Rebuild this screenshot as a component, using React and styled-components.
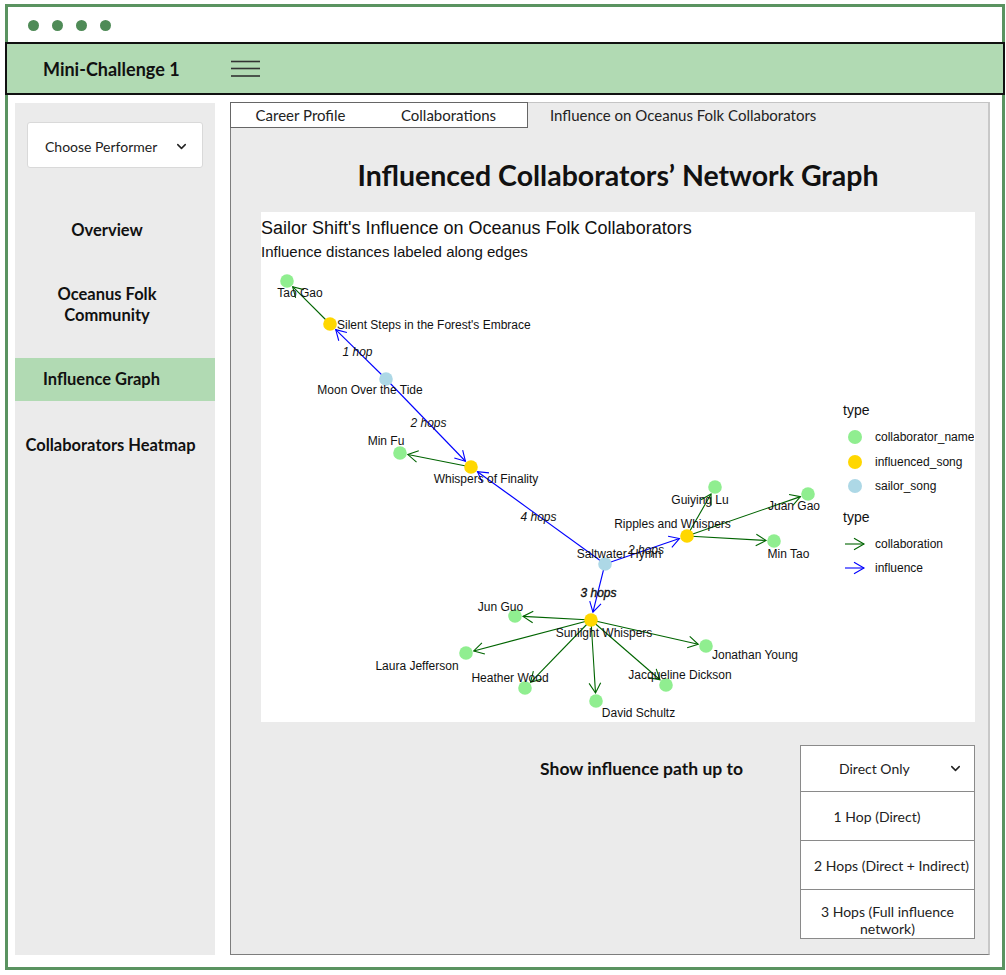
import styled, { createGlobalStyle } from "styled-components";
import { ChevronDown } from "lucide-react";

const GlobalStyle = createGlobalStyle`
  body {
    margin: 0;
    background: #ffffff;
    font-family: Lato, "Open Sans", sans-serif;
    color: #111;
  }
`;

const NODE_COLORS = {
  collab: "#90ee90",
  song: "#ffd700",
  sailor: "#add8e6",
};

const EDGE_COLORS = {
  green: "#006400",
  blue: "#0000ff",
};

// plot coordinates, origin at the top-left of the plot area
const nodes = {
  taoGao: { x: 26, y: 20, type: "collab", label: "Tao Gao", lx: 39, ly: 32 },
  silent: { x: 69, y: 63, type: "song", label: "Silent Steps in the Forest's Embrace", lx: 76, ly: 64, anchor: "start" },
  moon: { x: 125, y: 118, type: "sailor", label: "Moon Over the Tide", lx: 109, ly: 129 },
  minFu: { x: 139, y: 192, type: "collab", label: "Min Fu", lx: 125, ly: 180 },
  whispers: { x: 210, y: 206, type: "song", label: "Whispers of Finality", lx: 225, ly: 218 },
  saltwater: { x: 344, y: 303, type: "sailor", label: "Saltwater Hymn", lx: 358, ly: 293 },
  ripples: { x: 426, y: 275, type: "song", label: "Ripples and Whispers", lx: 411.5, ly: 263 },
  guiying: { x: 454, y: 226, type: "collab", label: "Guiying Lu", lx: 439, ly: 239 },
  juanGao: { x: 547, y: 233, type: "collab", label: "Juan Gao", lx: 533, ly: 245 },
  minTao: { x: 513, y: 280, type: "collab", label: "Min Tao", lx: 527.5, ly: 293 },
  sunlight: { x: 330, y: 359, type: "song", label: "Sunlight Whispers", lx: 343, ly: 372 },
  junGuo: { x: 254, y: 355, type: "collab", label: "Jun Guo", lx: 239.5, ly: 345.5 },
  laura: { x: 205, y: 392, type: "collab", label: "Laura Jefferson", lx: 156, ly: 405 },
  heather: { x: 264, y: 427, type: "collab", label: "Heather Wood", lx: 249, ly: 417 },
  david: { x: 335, y: 440, type: "collab", label: "David Schultz", lx: 377.5, ly: 452 },
  jacqueline: { x: 405, y: 424, type: "collab", label: "Jacqueline Dickson", lx: 419, ly: 414 },
  jonathan: { x: 445, y: 385, type: "collab", label: "Jonathan Young", lx: 494, ly: 394 },
};

const edges = [
  ["moon", "silent", "blue"],
  ["silent", "taoGao", "green"],
  ["moon", "whispers", "blue"],
  ["whispers", "minFu", "green"],
  ["saltwater", "whispers", "blue"],
  ["saltwater", "ripples", "blue"],
  ["saltwater", "sunlight", "blue"],
  ["ripples", "guiying", "green"],
  ["ripples", "juanGao", "green"],
  ["ripples", "minTao", "green"],
  ["sunlight", "junGuo", "green"],
  ["sunlight", "laura", "green"],
  ["sunlight", "heather", "green"],
  ["sunlight", "david", "green"],
  ["sunlight", "jacqueline", "green"],
  ["sunlight", "jonathan", "green"],
];

const edgeLabels = [
  { text: "1 hop", x: 96.5, y: 91 },
  { text: "2 hops", x: 167.5, y: 162 },
  { text: "4 hops", x: 277.5, y: 256 },
  { text: "2 hops", x: 385, y: 289 },
  { text: "3 hops", x: 337.5, y: 332, strong: true },
];

const navItems = [
  { label: "Overview" },
  { label: "Oceanus Folk\nCommunity" },
  { label: "Influence Graph", active: true },
  { label: "Collaborators Heatmap", shift: 7, lower: true },
];

const hopOptions = [
  { label: "1 Hop (Direct)", padRight: 21 },
  { label: "2 Hops (Direct + Indirect)", padLeft: 8 },
  { label: "3 Hops (Full influence network)", wrap: true },
];

const Edge = ({ from, to, color }) => {
  const a = nodes[from];
  const b = nodes[to];
  const dx = b.x - a.x;
  const dy = b.y - a.y;
  const len = Math.hypot(dx, dy);
  const ux = dx / len;
  const uy = dy / len;
  const tx = b.x - ux * 8;
  const ty = b.y - uy * 8;
  const px = -uy;
  const py = ux;
  const bx = tx - ux * 10;
  const by = ty - uy * 10;
  const stroke = EDGE_COLORS[color];
  return (
    <g stroke={stroke} strokeWidth="1.1" fill="none">
      <line x1={a.x} y1={a.y} x2={tx} y2={ty} />
      <polyline
        points={`${bx + px * 5.8},${by + py * 5.8} ${tx},${ty} ${bx - px * 5.8},${by - py * 5.8}`}
      />
    </g>
  );
};

const App = () => {
  return (
    <>
      <GlobalStyle />
      <Frame>
        <WindowBar>
          <WindowDot />
          <WindowDot />
          <WindowDot />
          <WindowDot />
        </WindowBar>
        <Header>
          <AppTitle>Mini-Challenge 1</AppTitle>
          <svg width="30" height="18" viewBox="0 0 30 18">
            <g stroke="#333" strokeWidth="1.6">
              <line x1="0" y1="1.5" x2="29" y2="1.5" />
              <line x1="0" y1="8.5" x2="29" y2="8.5" />
              <line x1="0" y1="16" x2="29" y2="16" />
            </g>
          </svg>
        </Header>
        <Body>
          <Sidebar>
            <PerformerSelect>
              <span>Choose Performer</span>
              <ChevronDown size={15} strokeWidth={2.4} color="#222" />
            </PerformerSelect>
            <Nav>
              {navItems.map((item) => (
                <NavItem
                  key={item.label}
                  $active={item.active}
                  $shift={item.shift || 0}
                  $lower={item.lower}
                >
                  {item.label}
                </NavItem>
              ))}
            </Nav>
          </Sidebar>
          <Panel>
            <TabBar>
              <TabGroup>
                <Tab $width={139}>Career Profile</Tab>
                <Tab $width={157}>Collaborations</Tab>
              </TabGroup>
              <ActiveTab>Influence on Oceanus Folk Collaborators</ActiveTab>
            </TabBar>
            <PanelBody>
              <PageTitle>Influenced Collaborators’ Network Graph</PageTitle>
              <ChartCard>
                <ChartTitle>Sailor Shift's Influence on Oceanus Folk Collaborators</ChartTitle>
                <ChartSubtitle>Influence distances labeled along edges</ChartSubtitle>
                <PlotRow>
                  <Plot width="574" height="461" viewBox="0 0 574 461">
                    {edges.map(([f, t, c]) => (
                      <Edge key={f + t} from={f} to={t} color={c} />
                    ))}
                    {edgeLabels.map((l, i) => (
                      <text
                        key={i}
                        x={l.x}
                        y={l.y}
                        textAnchor="middle"
                        dominantBaseline="central"
                        fontStyle="italic"
                        fontSize="12"
                        fill="#111"
                        stroke={l.strong ? "#111" : "none"}
                        strokeWidth={l.strong ? 0.35 : 0}
                      >
                        {l.text}
                      </text>
                    ))}
                    {Object.entries(nodes).map(([key, n]) => (
                      <circle key={key} cx={n.x} cy={n.y} r="6.8" fill={NODE_COLORS[n.type]} />
                    ))}
                    {Object.entries(nodes).map(([key, n]) => (
                      <text
                        key={key + "-label"}
                        x={n.lx}
                        y={n.ly}
                        textAnchor={n.anchor || "middle"}
                        dominantBaseline="central"
                        fontSize="12"
                        fill="#111"
                      >
                        {n.label}
                      </text>
                    ))}
                  </Plot>
                  <Legend>
                    <LegendTitle>type</LegendTitle>
                    <LegendItem>
                      <LegendDot $color={NODE_COLORS.collab} />
                      collaborator_name
                    </LegendItem>
                    <LegendItem>
                      <LegendDot $color={NODE_COLORS.song} />
                      influenced_song
                    </LegendItem>
                    <LegendItem>
                      <LegendDot $color={NODE_COLORS.sailor} />
                      sailor_song
                    </LegendItem>
                    <LegendTitle $gap>type</LegendTitle>
                    <LegendItem $line>
                      <LegendArrow color={EDGE_COLORS.green} />
                      collaboration
                    </LegendItem>
                    <LegendItem $line>
                      <LegendArrow color={EDGE_COLORS.blue} />
                      influence
                    </LegendItem>
                  </Legend>
                </PlotRow>
              </ChartCard>
              <Controls>
                <ControlLabel>Show influence path up to</ControlLabel>
                <HopSelect>
                  <HopCurrent>
                    <span>Direct Only</span>
                    <ChevronDown size={15} strokeWidth={2.4} color="#222" />
                  </HopCurrent>
                  {hopOptions.map((o) => (
                    <HopOption
                      key={o.label}
                      $padLeft={o.padLeft || 0}
                      $padRight={o.padRight || 0}
                      $wrap={o.wrap}
                    >
                      {o.label}
                    </HopOption>
                  ))}
                </HopSelect>
              </Controls>
            </PanelBody>
          </Panel>
        </Body>
      </Frame>
    </>
  );
};

const LegendArrow = ({ color }) => (
  <svg width="22" height="14" viewBox="0 0 22 14">
    <g stroke={color} strokeWidth="1.1" fill="none">
      <line x1="1" y1="7" x2="20" y2="7" />
      <polyline points="10,1.2 20,7 10,12.8" />
    </g>
  </svg>
);

export default App;

const Frame = styled.div`
  box-sizing: border-box;
  width: 1000px;
  height: 966px;
  margin: 4px 0 0 5px;
  border: 3px solid #5a9360;
  display: flex;
  flex-direction: column;
`;

const WindowBar = styled.div`
  height: 35px;
  display: flex;
  align-items: center;
  gap: 13px;
  padding-left: 20px;
  padding-top: 2px;
  box-sizing: border-box;
`;

const WindowDot = styled.span`
  width: 11px;
  height: 11px;
  border-radius: 50%;
  background: #4f8b57;
`;

const Header = styled.div`
  height: 53px;
  margin: 0 -3px;
  box-sizing: border-box;
  border: 2px solid #111;
  background: #b1dab3;
  display: flex;
  align-items: center;
  gap: 51px;
  padding-left: 36px;
`;

const AppTitle = styled.div`
  font-size: 18px;
  font-weight: 700;
  color: #111;
`;

const Body = styled.div`
  flex: 1;
  display: flex;
  gap: 15px;
  padding: 7px 12px 12px 7px;
  min-height: 0;
`;

const Sidebar = styled.div`
  width: 200px;
  margin-top: 1px;
  background: #ebebeb;
  padding-top: 19px;
  box-sizing: border-box;
`;

const PerformerSelect = styled.div`
  margin: 0 12px;
  height: 46px;
  box-sizing: border-box;
  background: #fff;
  border: 1px solid #d9d9d9;
  border-radius: 3px;
  display: flex;
  align-items: center;
  justify-content: space-between;
  padding: 2px 13px 0 17px;
  font-size: 14px;
  color: #222;
`;

const Nav = styled.div`
  margin-top: 41px;
  display: flex;
  flex-direction: column;
  gap: 21px;
`;

const NavItem = styled.div`
  padding: 11px ${(p) => (p.$active ? "27px" : "16px")} 11px 0;
  margin-top: ${(p) => (p.$lower ? "2px" : "0")};
  line-height: 21px;
  font-size: 16.5px;
  font-weight: 700;
  text-align: center;
  white-space: pre-line;
  background: ${(p) => (p.$active ? "#b1dab3" : "transparent")};
  transform: translateX(${(p) => p.$shift / 2}px);
`;

const Panel = styled.div`
  flex: 1;
  box-sizing: border-box;
  background: #ebebeb;
  border: 1px solid #7d7d7d;
  border-top-color: #c4c4c4;
  border-right: 2px solid #c8c8c8;
  display: flex;
  flex-direction: column;
`;

const TabBar = styled.div`
  display: flex;
  align-items: stretch;
  height: 26px;
  margin: -1px 0 0 -1px;
`;

const TabGroup = styled.div`
  display: flex;
  background: #fff;
  border: 1px solid #666;
  box-sizing: border-box;
`;

const Tab = styled.div`
  width: ${(p) => p.$width}px;
  display: flex;
  align-items: center;
  justify-content: center;
  font-size: 15px;
  color: #222;
`;

const ActiveTab = styled.div`
  display: flex;
  align-items: center;
  padding-left: 22px;
  font-size: 15px;
  color: #222;
`;

const PanelBody = styled.div`
  padding: 0 13px 0 30px;
  display: flex;
  flex-direction: column;
`;

const PageTitle = styled.h1`
  margin: 31px 0 0;
  font-size: 28.5px;
  line-height: 32px;
  font-weight: 700;
  text-align: center;
  color: #111;
`;

const ChartCard = styled.div`
  margin-top: 21px;
  height: 510px;
  background: #fff;
  display: flex;
  flex-direction: column;
  font-family: "Liberation Sans", Arial, sans-serif;
  color: #111;
`;

const ChartTitle = styled.div`
  margin-top: 5px;
  font-size: 18px;
  line-height: 22px;
`;

const ChartSubtitle = styled.div`
  margin-top: 4px;
  font-size: 15px;
  line-height: 18px;
`;

const PlotRow = styled.div`
  flex: 1;
  display: flex;
`;

const Plot = styled.svg`
  flex: none;
  display: block;
  font-family: "Liberation Sans", Arial, sans-serif;
`;

const Legend = styled.div`
  padding: 139px 0 0 8px;
  display: flex;
  flex-direction: column;
  white-space: nowrap;
  overflow: hidden;
`;

const LegendTitle = styled.div`
  font-size: 14px;
  line-height: 20px;
  margin-top: ${(p) => (p.$gap ? "8.5px" : "0")};
  margin-bottom: ${(p) => (p.$gap ? "5px" : "4.75px")};
`;

const LegendItem = styled.div`
  height: ${(p) => (p.$line ? "24px" : "24.5px")};
  display: flex;
  align-items: center;
  gap: ${(p) => (p.$line ? "9px" : "13px")};
  padding-left: ${(p) => (p.$line ? "1px" : "5px")};
  font-size: 12px;
`;

const LegendDot = styled.span`
  width: 14px;
  height: 14px;
  border-radius: 50%;
  background: ${(p) => p.$color};
`;

const Controls = styled.div`
  margin-top: 23px;
  display: flex;
  justify-content: flex-end;
  align-items: flex-start;
  gap: 57px;
`;

const ControlLabel = styled.div`
  font-size: 17.5px;
  font-weight: 700;
  line-height: 47px;
  color: #111;
`;

const HopSelect = styled.div`
  width: 175px;
  display: flex;
  flex-direction: column;
  background: #fff;
`;

const HopCurrent = styled.div`
  height: 47px;
  box-sizing: border-box;
  border: 1px solid #8a8a8a;
  display: flex;
  align-items: center;
  justify-content: space-between;
  padding: 0 11px 0 38px;
  font-size: 14px;
  color: #222;
`;

const HopOption = styled.div`
  height: 49px;
  box-sizing: border-box;
  border: 1px solid #8a8a8a;
  border-top: none;
  display: flex;
  align-items: ${(p) => (p.$wrap ? "flex-start" : "center")};
  justify-content: center;
  text-align: center;
  padding: ${(p) => (p.$wrap ? "13px 12px 0" : "0")};
  padding-left: ${(p) => (p.$wrap ? "12px" : `${p.$padLeft}px`)};
  padding-right: ${(p) => (p.$wrap ? "12px" : `${p.$padRight}px`)};
  font-size: 14px;
  line-height: 17px;
  white-space: ${(p) => (p.$wrap ? "normal" : "nowrap")};
  color: #222;
`;
